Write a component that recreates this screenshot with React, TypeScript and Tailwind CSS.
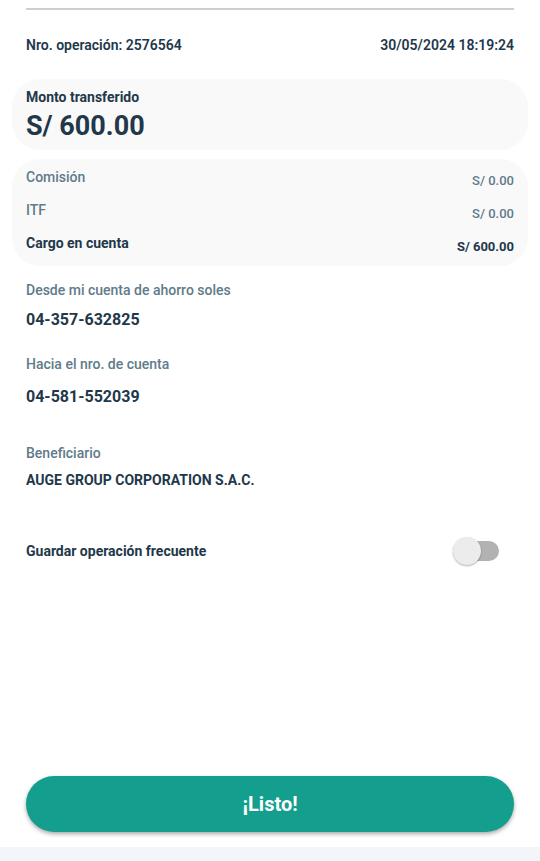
import React, { useState } from "react";

const costs = [
  { label: "Comisión", value: "S/ 0.00", strong: false },
  { label: "ITF", value: "S/ 0.00", strong: false },
  { label: "Cargo en cuenta", value: "S/ 600.00", strong: true },
];

export default function App() {
  const [frequent, setFrequent] = useState(false);
  return (
    <div className="flex min-h-screen flex-col bg-white font-['Roboto',sans-serif] text-sm leading-4 font-bold text-[#22384a]">
      <main className="flex grow flex-col px-3 pt-2">
        <hr className="mx-3.5 border-t-2 border-[#cfcfcf]" />
        <header className="mt-[27px] flex justify-between px-3.5 font-semibold">
          <p>Nro. operación: 2576564</p>
          <time dateTime="2024-05-30T18:19:24">30/05/2024 18:19:24</time>
        </header>

        <section className="mt-[26px] rounded-[28px] bg-[#f9f9f9] px-3.5 pt-2.5 pb-2">
          <h2>Monto transferido</h2>
          <p className="mt-[5px] text-[27px] leading-8">S/ 600.00</p>
        </section>

        <dl className="mt-[9px] flex flex-col gap-[13px] rounded-[28px] bg-[#f9f9f9] px-3.5 pt-2.5 pb-[11px]">
          {costs.map((c) => (
            <div key={c.label} className={c.strong ? "flex justify-between" : "flex justify-between font-medium text-[#607b89]"}>
              <dt>{c.label}</dt>
              <dd className="pt-1 text-[13px] leading-4">{c.value}</dd>
            </div>
          ))}
        </dl>

        <section className="mt-4 px-3.5">
          <h2 className="font-medium text-[#607b89]">Desde mi cuenta de ahorro soles</h2>
          <p className="mt-3 text-base leading-5">04-357-632825</p>
        </section>
        <section className="mt-[26px] px-3.5">
          <h2 className="font-medium text-[#607b89]">Hacia el nro. de cuenta</h2>
          <p className="mt-[15px] text-base leading-5">04-581-552039</p>
        </section>
        <section className="mt-[38px] px-3.5">
          <h2 className="font-medium text-[#607b89]">Beneficiario</h2>
          <p className="mt-[11px]">AUGE GROUP CORPORATION S.A.C.</p>
        </section>

        <label className="mt-[49px] flex items-center justify-between pr-[29px] pl-3.5">
          Guardar operación frecuente
          <span className="relative flex h-7 w-[46px] items-center">
            <input type="checkbox" role="switch" checked={frequent} onChange={(e) => setFrequent(e.target.checked)} className="peer h-5 w-full appearance-none rounded-full bg-[#b2b2b2]" />
            <span className="pointer-events-none absolute top-0 left-0 size-7 rounded-full bg-[#ececec] shadow-[0_1px_2px_rgba(0,0,0,0.3)] peer-checked:left-[18px]" />
          </span>
        </label>

        <button type="button" className="mx-3.5 mt-auto mb-[15px] h-14 rounded-full bg-[#149e8e] text-xl text-white shadow-[0_2px_4px_rgba(0,0,0,0.35)]">
          ¡Listo!
        </button>
      </main>
      <footer className="h-3.5 bg-[#f4f5f8]" />
    </div>
  );
}
